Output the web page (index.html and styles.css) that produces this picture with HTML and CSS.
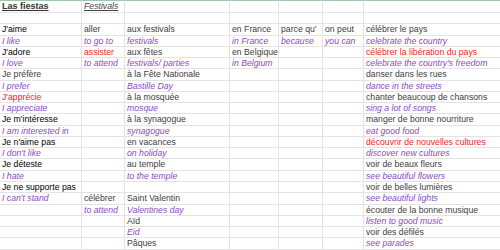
FILE: index.html
```html
<!DOCTYPE html>
<html lang="fr">
<head>
<meta charset="utf-8">
<title>Las fiestas</title>
<link rel="stylesheet" href="styles.css">
</head>
<body>
<div class="sheet">
  <div class="c hd"><span class="title">Las fiestas</span></div><div class="c hd"><span class="sub">Festivals</span></div><div class="c hd"></div><div class="c hd"></div><div class="c hd"></div><div class="c hd"></div><div class="c hd"></div>
  <div class="c"></div><div class="c"></div><div class="c"></div><div class="c"></div><div class="c"></div><div class="c"></div><div class="c"></div>

  <div class="c k">J'aime</div><div class="c">aller</div><div class="c">aux festivals</div><div class="c">en France</div><div class="c">parce qu'</div><div class="c">on peut</div><div class="c">célébrer le pays</div>
  <div class="c p">I like</div><div class="c p">to go to</div><div class="c p">festivals</div><div class="c p">in France</div><div class="c p">because</div><div class="c p">you can</div><div class="c p">celebrate the country</div>

  <div class="c k">J'adore</div><div class="c r">assister</div><div class="c">aux fêtes</div><div class="c">en Belgique</div><div class="c"></div><div class="c"></div><div class="c r">célébrer la libération du pays</div>
  <div class="c p">I love</div><div class="c p">to attend</div><div class="c p">festivals/ parties</div><div class="c p">in Belgium</div><div class="c"></div><div class="c"></div><div class="c p">celebrate the country's freedom</div>

  <div class="c">Je préfère</div><div class="c"></div><div class="c">à la Fête Nationale</div><div class="c"></div><div class="c"></div><div class="c"></div><div class="c">danser dans les rues</div>
  <div class="c p">I prefer</div><div class="c"></div><div class="c p">Bastille Day</div><div class="c"></div><div class="c"></div><div class="c"></div><div class="c p">dance in the streets</div>

  <div class="c r">J'apprécie</div><div class="c"></div><div class="c">à la mosquée</div><div class="c"></div><div class="c"></div><div class="c"></div><div class="c">chanter beaucoup de chansons</div>
  <div class="c p">I appreciate</div><div class="c"></div><div class="c p">mosque</div><div class="c"></div><div class="c"></div><div class="c"></div><div class="c p">sing a lot of songs</div>

  <div class="c k">Je m'intéresse</div><div class="c"></div><div class="c">à la synagogue</div><div class="c"></div><div class="c"></div><div class="c"></div><div class="c">manger de bonne nourriture</div>
  <div class="c p">I am interested in</div><div class="c"></div><div class="c p">synagogue</div><div class="c"></div><div class="c"></div><div class="c"></div><div class="c p">eat good food</div>

  <div class="c k">Je n'aime pas</div><div class="c"></div><div class="c">en vacances</div><div class="c"></div><div class="c"></div><div class="c"></div><div class="c r">découvrir de nouvelles cultures</div>
  <div class="c p">I don't like</div><div class="c"></div><div class="c p">on holiday</div><div class="c"></div><div class="c"></div><div class="c"></div><div class="c p">discover new cultures</div>

  <div class="c k">Je déteste</div><div class="c"></div><div class="c">au temple</div><div class="c"></div><div class="c"></div><div class="c"></div><div class="c">voir de beaux fleurs</div>
  <div class="c p">I hate</div><div class="c"></div><div class="c p">to the temple</div><div class="c"></div><div class="c"></div><div class="c"></div><div class="c p">see beautiful flowers</div>

  <div class="c k">Je ne supporte pas</div><div class="c"></div><div class="c"></div><div class="c"></div><div class="c"></div><div class="c"></div><div class="c">voir de belles lumières</div>
  <div class="c p">I can't stand</div><div class="c">célébrer</div><div class="c">Saint Valentin</div><div class="c"></div><div class="c"></div><div class="c"></div><div class="c p">see beautiful lights</div>

  <div class="c"></div><div class="c p">to attend</div><div class="c p">Valentines day</div><div class="c"></div><div class="c"></div><div class="c"></div><div class="c">écouter de la bonne musique</div>
  <div class="c"></div><div class="c"></div><div class="c">Aïd</div><div class="c"></div><div class="c"></div><div class="c"></div><div class="c p">listen to good music</div>

  <div class="c"></div><div class="c"></div><div class="c p">Eid</div><div class="c"></div><div class="c"></div><div class="c"></div><div class="c">voir des défilés</div>
  <div class="c"></div><div class="c"></div><div class="c">Pâques</div><div class="c"></div><div class="c"></div><div class="c"></div><div class="c p">see parades</div>
</div>
</body>
</html>
```

FILE: styles.css
```css
html, body {
  margin: 0;
  padding: 0;
  background: #ffffff;
}

body {
  font-family: "Liberation Sans", Arial, sans-serif;
  font-size: 8.7px;
  color: #404040;
  width: 500px;
  height: 250px;
  overflow: hidden;
}

.sheet {
  display: grid;
  grid-template-columns: 82px 43px 105px 49px 44px 41px 1fr;
  grid-template-rows: 13px repeat(21, 11.27px);
  width: 500px;
}

.c {
  box-sizing: border-box;
  border-right: 1px solid #e3e3e3;
  border-bottom: 1px solid #e3e3e3;
  padding-left: 2px;
  white-space: nowrap;
  overflow: visible;
  line-height: 11px;
}

.c:nth-child(7n) {
  border-right: none;
}

.hd {
  border-top: 1px solid #9cc9a8;
  line-height: 11px;
}

.title {
  font-weight: bold;
  font-size: 9px;
  color: #333333;
  text-decoration: underline;
}

.sub {
  font-style: italic;
  color: #444444;
  text-decoration: underline;
}

.k {
  color: #000000;
}

.p {
  color: #8a4cc4;
  font-style: italic;
}

.r {
  color: #ff1a1a;
}
```
